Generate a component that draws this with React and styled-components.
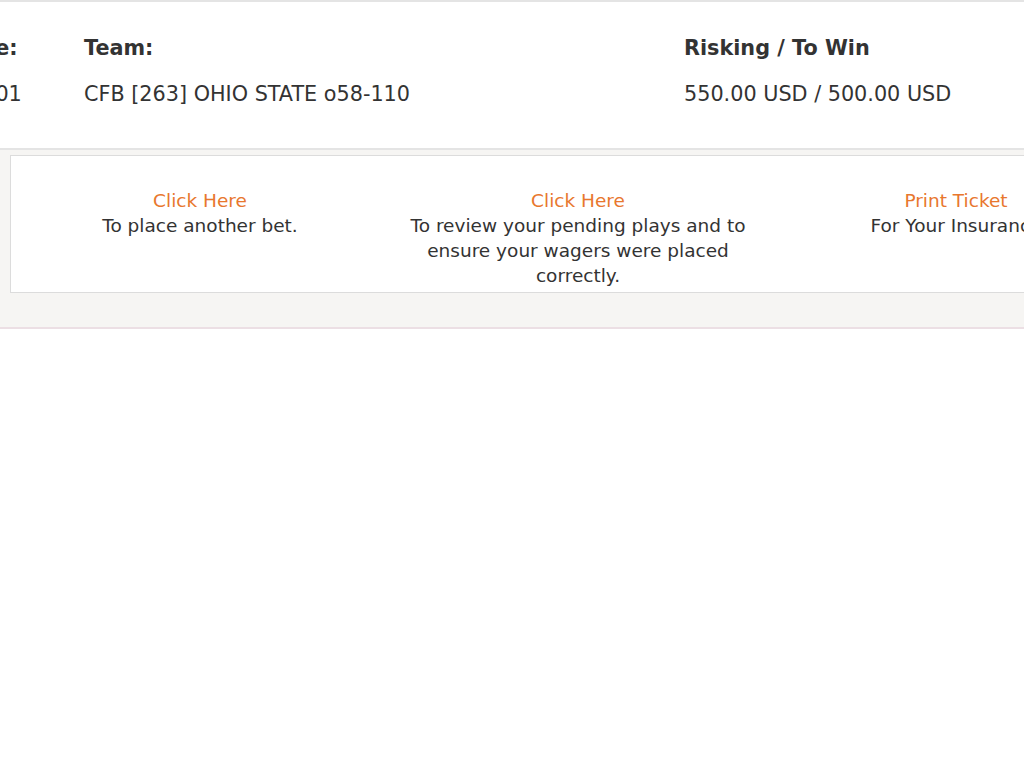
import React from "react";
import styled, { createGlobalStyle } from "styled-components";

const GlobalStyle = createGlobalStyle`
  html, body {
    margin: 0;
    padding: 0;
    background: #ffffff;
    overflow: hidden;
  }
  body {
    font-family: "DejaVu Sans", Verdana, sans-serif;
    color: #333333;
  }
`;

const Page = styled.div`
  width: 1024px;
  height: 768px;
  overflow: hidden;
  border-top: 2px solid #e4e4e4;
  box-sizing: border-box;
`;

const TicketTable = styled.div`
  margin-left: -38px;
  width: 1200px;
  display: grid;
  grid-template-columns: 122px 600px 1fr;
  grid-auto-rows: 46px;
  padding: 23px 0 31px;
  font-size: 20.75px;
  line-height: 46px;
`;

const HeadCell = styled.div`
  font-weight: bold;
  white-space: nowrap;
  margin-left: ${({ $shift }) => $shift || 0}px;
`;

const Cell = styled.div`
  white-space: nowrap;
`;

const ActionsPanel = styled.div`
  background: #f6f5f3;
  border-top: 2px solid #e4e4e4;
  border-bottom: 2px solid #ecdfe4;
  padding: 5px 0 34px 10px;
`;

const ActionsBox = styled.div`
  width: 1134px;
  background: #ffffff;
  border: 1px solid #dcdcdc;
  display: grid;
  grid-template-columns: repeat(3, 378px);
  padding: 32px 0 4px;
  font-size: 18.5px;
  line-height: 25px;
  text-align: center;
`;

const Action = styled.div`
  padding: 0 16px;
`;

const ActionLink = styled.a`
  display: block;
  color: #e8772e;
  text-decoration: none;
`;

const ActionText = styled.div`
  color: #333333;
`;

const actions = [
  { link: "Click Here", text: "To place another bet." },
  {
    link: "Click Here",
    text: "To review your pending plays and to ensure your wagers were placed correctly.",
  },
  { link: "Print Ticket", text: "For Your Insurance" },
];

export default function App() {
  return (
    <>
      <GlobalStyle />
      <Page>
        <TicketTable>
          <HeadCell $shift={-8}>Date:</HeadCell>
          <HeadCell>Team:</HeadCell>
          <HeadCell>Risking / To Win</HeadCell>
          <Cell>11/01</Cell>
          <Cell>CFB [263] OHIO STATE o58-110</Cell>
          <Cell>550.00 USD / 500.00 USD</Cell>
        </TicketTable>
        <ActionsPanel>
          <ActionsBox>
            {actions.map((a, i) => (
              <Action key={i}>
                <ActionLink href="#">{a.link}</ActionLink>
                <ActionText>{a.text}</ActionText>
              </Action>
            ))}
          </ActionsBox>
        </ActionsPanel>
      </Page>
    </>
  );
}
